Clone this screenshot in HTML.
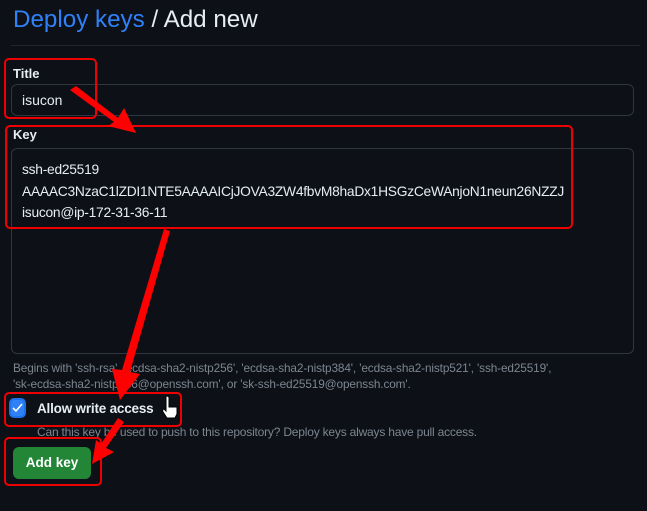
<!DOCTYPE html>
<html><head><meta charset="utf-8"><style>
*{box-sizing:border-box;margin:0;padding:0}
body{width:647px;height:511px;background:#0d1117;color:#e6edf3;font-family:"Liberation Sans",sans-serif;position:relative;overflow:hidden}
.a{position:absolute;white-space:nowrap}
.box{position:absolute;border:1px solid #30363d;border-radius:6px;background:#0d1117}
.red{position:absolute;border:2px solid #e00;border-radius:5px}
</style></head><body>
<div class="a" style="left:13px;top:6px;font-size:24.2px;letter-spacing:0"><span style="color:#2f81f7">Deploy keys</span> / Add new</div>
<div class="a" style="left:11px;top:45px;width:629px;height:1px;background:#21262d"></div>
<div class="a" style="left:13px;top:66px;font-size:13px;font-weight:bold">Title</div>
<div class="box" style="left:11px;top:84px;width:623px;height:32px"></div>
<div class="a" style="left:22px;top:92px;font-size:14px">isucon</div>
<div class="a" style="left:13px;top:127px;font-size:13px;font-weight:bold">Key</div>
<div class="box" style="left:11px;top:148px;width:623px;height:206px"></div>
<div class="a" style="left:22px;top:159px;font-size:13.8px;line-height:21.5px;letter-spacing:-0.26px">ssh-ed25519<br>AAAAC3NzaC1lZDI1NTE5AAAAICjJOVA3ZW4fbvM8haDx1HSGzCeWAnjoN1neun26NZZJ<br>isucon@ip-172-31-36-11</div>
<div class="a" style="left:13px;top:360px;font-size:11.8px;line-height:16px;color:#7d8590;letter-spacing:-0.12px">Begins with 'ssh-rsa', 'ecdsa-sha2-nistp256', 'ecdsa-sha2-nistp384', 'ecdsa-sha2-nistp521', 'ssh-ed25519',<br>'sk-ecdsa-sha2-nistp256@openssh.com', or 'sk-ssh-ed25519@openssh.com'.</div>
<div class="a" style="left:9px;top:398px;width:17px;height:20px;border:2px solid #1f6feb;border-radius:5px;background:#2f81f7"></div>
<svg class="a" style="left:11px;top:401px" width="13" height="13" viewBox="0 0 13 13"><path d="M2 7l3 3 6-7" stroke="#fff" stroke-width="1.6" fill="none"/></svg>
<div class="a" style="left:37px;top:401px;font-size:13.5px;font-weight:bold;letter-spacing:-0.2px">Allow write access</div>
<div class="a" style="left:37px;top:425px;font-size:12px;color:#7d8590;letter-spacing:-0.2px">Can this key be used to push to this repository? Deploy keys always have pull access.</div>
<div class="a" style="left:13px;top:447px;width:78px;height:32px;background:#238636;border-radius:6px;color:#fff;font-weight:bold;font-size:13.5px;text-align:center;line-height:32px">Add key</div>
<div class="red" style="left:4px;top:58px;width:93px;height:61px"></div>
<div class="red" style="left:5px;top:125px;width:568px;height:104px"></div>
<div class="red" style="left:4px;top:392px;width:178px;height:35px"></div>
<div class="red" style="left:4px;top:437px;width:98px;height:49px"></div>
<svg class="a" style="left:0;top:0" width="647" height="511">
<g fill="#f00">
<polygon points="70,90 76,86 118,118 124,108 136,133 108,126 114,122"/>
<polygon points="164,229 170,231 130,372 140,374 120,400 112,369 122,370"/>
<polygon points="118,418 124,422 106,448 114,452 92,464 96,440 101,444"/>
</g>
<path d="M166 397v14l-2-2q-2 0-1 3l4 6h8l2-4v-7h-8v-10q-3-2-3 0z" fill="#fff" stroke="#000" stroke-width="1"/>
</svg>
</body></html>
